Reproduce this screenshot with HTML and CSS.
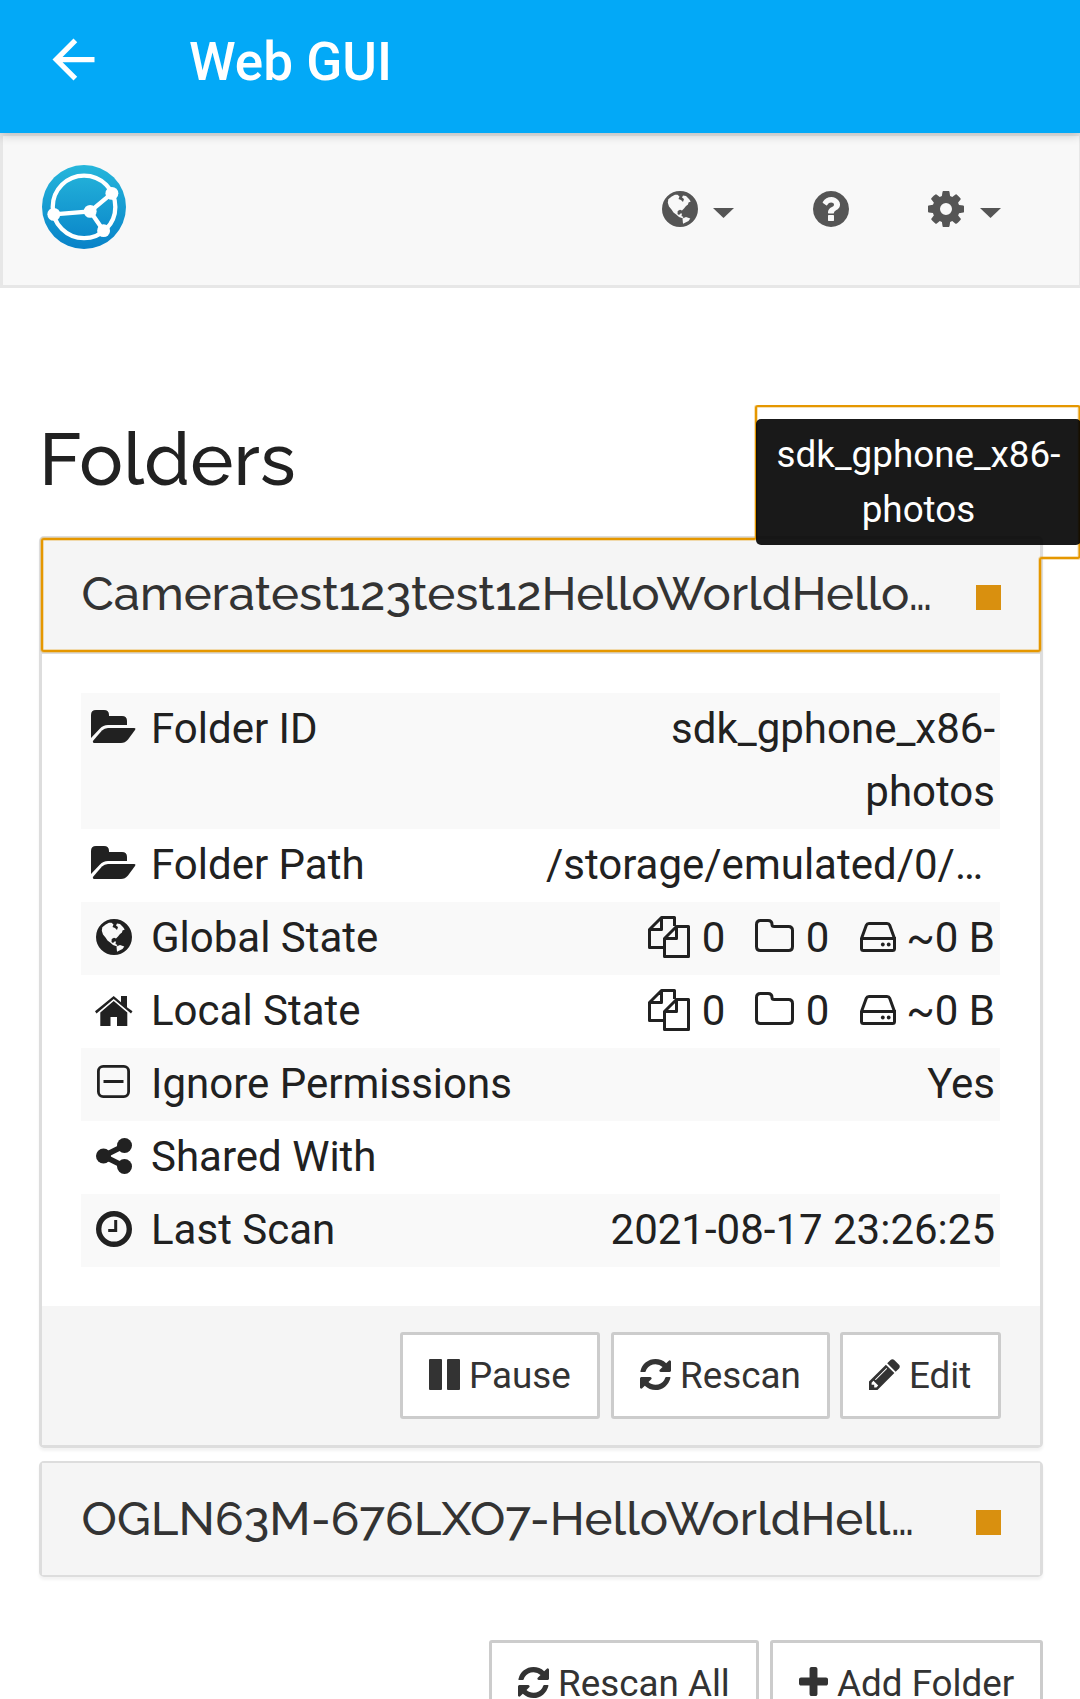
FILE: index.html
```html
<!DOCTYPE html>
<html lang="en">
<head>
<meta charset="utf-8">
<title>Web GUI</title>
<link rel="stylesheet" href="styles.css">
</head>
<body>
<svg class="defs" aria-hidden="true">
  <symbol id="folder-open" viewBox="0 0 45 33"><path d="M0 28V5Q0 0 5 0H13Q18 0 18 5V6H31Q36 6 36 11V15H17Q12 15 9 18.500Z"/><path d="M2.300 30.500L11 20.500Q13.500 18 17 18H43Q45.200 18 44 20L37 29.500Q34 33 30 33H3.500Q1 33 2.300 30.500Z"/></symbol>
  <symbol id="globe" viewBox="0 0 36 36"><path fill-rule="evenodd" d="M18 0A18 18 0 1 1 18 36A18 18 0 1 1 18 0ZM6.300 8.300L9.700 5.500L13 3.800L15.500 3.800L17.500 5.500L16.500 8L19 9L21 11L22 8L20 6.500L21 4.500L24 5L27 8L28.700 10.500L26.500 11.500L26 13.500L24 15L22 17.500L20 19.500L18 18.800L15.700 20L15.500 23L17 24L18.500 22.500L20 22.500L19.500 25L21.500 26L20.500 27.300L17 26L14.500 23.800L11.500 21.500L9.500 18.500L7 15.500L5.800 11.700ZM20.500 27.500L24 26L28.300 27.500L26.500 30L21 32.700Z"/></symbol>
  <symbol id="home" viewBox="0 0 38 30"><path d="M5.300 16.500L18.700 5L32.300 16.500V30H22V21H15.500V30H5.300Z"/><path d="M18.700 0L26 6.200V0H32V11.300L37.500 15.300L36 17.500L18.700 3L1.500 17.500L0 15.300Z"/></symbol>
  <symbol id="minus-square" viewBox="0 0 33 33"><rect x="1.400" y="1.400" width="30.200" height="30.200" rx="4.800" fill="none" stroke="currentColor" stroke-width="2.800"/><path d="M6.500 15H26.500V18H6.500Z"/></symbol>
  <symbol id="share" viewBox="0 0 36 36"><path d="M28.500 7.500L7.500 18L28.500 28.500" fill="none" stroke="currentColor" stroke-width="5.500"/><circle cx="28.500" cy="7.500" r="7.500"/><circle cx="7.500" cy="18" r="7.500"/><circle cx="28.500" cy="28.500" r="7.500"/></symbol>
  <symbol id="clock" viewBox="0 0 36 36"><circle cx="18" cy="18" r="15.300" fill="none" stroke="currentColor" stroke-width="5.400"/><path d="M18.200 9H21.200V21H12.200V18H18.200Z"/></symbol>
  <symbol id="files" viewBox="0 0 42 42"><path d="M15 31.500H1.500V13.500L13.500 1.500H26.500V10M1.400 13.500H13.500V1.400M16.500 40.500V22.500L28.500 10.500H40.500V40.500ZM16.800 22.500H28.500V10.700" fill="none" stroke="currentColor" stroke-width="3" stroke-linejoin="round"/></symbol>
  <symbol id="folder" viewBox="0 0 39 33"><path d="M1.500 5.500Q1.500 1.500 5.500 1.500H13Q17 1.500 17 5.500Q17 7.500 19.200 7.500H33.500Q37.500 7.500 37.500 11.500V27.500Q37.500 31.500 33.500 31.500H5.500Q1.500 31.500 1.500 27.500Z" fill="none" stroke="currentColor" stroke-width="3"/></symbol>
  <symbol id="hdd" viewBox="0 0 36 30"><path d="M1.500 16.500H34.500V26.500Q34.500 28.500 32.500 28.500H3.500Q1.500 28.500 1.500 26.500V16.500L6.300 3.300Q7 1.500 9 1.500H27Q29 1.500 29.700 3.300L34.500 16.500" fill="none" stroke="currentColor" stroke-width="3"/><circle cx="22.800" cy="22.500" r="1.900"/><circle cx="28.700" cy="22.500" r="1.900"/></symbol>
  <symbol id="pause" viewBox="0 0 31 31"><rect width="13" height="31" rx="1"/><rect x="18" width="13" height="31" rx="1"/></symbol>
  <symbol id="refresh" viewBox="128 128 1536 1536"><path d="M1639 1056q0 5-1 7-64 268-268 434.500t-478 166.500q-146 0-282.500-55t-243.500-157l-129 129q-19 19-45 19t-45-19-19-45v-448q0-26 19-45t45-19h448q26 0 45 19t19 45-19 45l-137 137q71 66 161 102t187 36q134 0 250-65t186-179q11-17 53-117 8-23 30-23h192q13 0 22.500 9.500t9.500 22.500zm25-800v448q0 26-19 45t-45 19h-448q-26 0-45-19t-19-45 19-45l138-138q-148-137-349-137-134 0-250 65t-186 179q-11 17-53 117-8 23-30 23h-199q-13 0-22.500-9.500t-9.500-22.500v-7q65-268 270-434.500t480-166.500q146 0 284 55.500t245 156.500l130-129q19-19 45-19t45 19 19 45z"/></symbol>
  <symbol id="pencil" viewBox="128 138 1526 1526"><path d="M491 1536l91-91-235-235-91 91v107h128v128h107zm523-928q0-22-22-22-10 0-17 7l-542 542q-7 7-7 17 0 22 22 22 10 0 17-7l542-542q7-7 7-17zm-54-192l416 416-832 832h-416v-416zm683 96q0 53-37 90l-166 166-416-416 166-165q36-38 90-38 53 0 91 38l235 234q37 39 37 91z"/></symbol>
  <symbol id="plus" viewBox="192 128 1408 1408"><path d="M1600 736v192q0 40-28 68t-68 28h-416v416q0 40-28 68t-68 28h-192q-40 0-68-28t-28-68v-416h-416q-40 0-68-28t-28-68v-192q0-40 28-68t68-28h416v-416q0-40 28-68t68-28h192q40 0 68 28t28 68v416h416q40 0 68 28t28 68z"/></symbol>
  <symbol id="question" viewBox="128 128 1536 1536"><path d="M1024 1376v-192q0-14-9-23t-23-9h-192q-14 0-23 9t-9 23v192q0 14 9 23t23 9h192q14 0 23-9t9-23zm256-672q0-88-55.500-163t-138.500-116-170-41q-243 0-371 213-15 24 8 42l132 100q7 6 19 6 16 0 25-12 53-68 86-92 34-24 86-24 48 0 85.500 26t37.500 59q0 38-20 61t-68 45q-63 28-115.500 86.500t-52.500 125.500v36q0 14 9 23t23 9h192q14 0 23-9t9-23q0-19 21.500-49.500t54.500-49.500q32-18 49-28.500t46-35 44.500-48 28-60.500 12.500-81zm384 192q0 209-103 385.500t-279.500 279.500-385.500 103-385.500-103-279.500-279.500-103-385.500 103-385.500 279.500-279.500 385.500-103 385.500 103 279.500 279.500 103 385.500z"/></symbol>
  <symbol id="cog" viewBox="128 128 1536 1536"><path d="M1152 896q0-106-75-181t-181-75-181 75-75 181 75 181 181 75 181-75 75-181zm512-109v222q0 12-8 23t-20 13l-185 28q-19 54-39 91 35 50 107 138 10 12 10 25t-9 23q-27 37-99 108t-94 71q-12 0-26-9l-138-108q-44 23-91 38-16 136-29 186-7 28-36 28h-222q-14 0-24.500-8.500t-11.500-21.500l-28-184q-49-16-90-37l-141 107q-10 9-25 9-14 0-25-11-126-114-165-168-7-10-7-23 0-12 8-23 15-21 51-66.500t54-70.500q-27-50-41-99l-183-27q-13-2-21-12.500t-8-23.500v-222q0-12 8-23t19-13l186-28q14-46 39-92-40-57-107-138-10-12-10-24 0-10 9-23 26-36 98.500-107.500t94.500-71.500q13 0 26 10l138 107q44-23 91-38 16-136 29-186 7-28 36-28h222q14 0 24.500 8.500t11.500 21.500l28 184q49 16 90 37l142-107q9-9 24-9 13 0 25 10 129 119 165 170 7 8 7 22 0 12-8 23-15 21-51 66.500t-54 70.500q26 50 41 98l183 28q13 2 21 12.500t8 23.500z"/></symbol>
</svg>

<header class="appbar">
  <svg class="back" viewBox="0 0 24 24"><path d="M20 11H7.830l5.590-5.590L12 4l-8 8 8 8 1.410-1.410L7.830 13H20v-2z"/></svg>
  <h1 class="appbar-title">Web GUI</h1>
</header>

<nav class="navbar">
  <svg class="logo" viewBox="0 0 117.300 117.300">
    <defs><linearGradient id="logo-fill" x1="0" y1="0" x2="0" y2="1"><stop offset="0" stop-color="#26b6db"/><stop offset="1" stop-color="#0882c8"/></linearGradient></defs>
    <circle cx="58.650" cy="58.650" r="58.650" fill="url(#logo-fill)"/>
    <g fill="none" stroke="#fff" stroke-width="6"><circle cx="58.700" cy="58.500" r="43.700"/><path d="M16.500 68.900L67.300 64.700L97.600 39.600M67.300 64.700L86 91.700"/></g>
    <g fill="#fff"><circle cx="67.300" cy="64.700" r="9"/><circle cx="97.600" cy="39.600" r="9"/><circle cx="16.500" cy="68.900" r="9"/><circle cx="86" cy="91.700" r="9"/></g>
  </svg>
  <div class="nav-items">
    <span class="nav-item"><svg class="icon i36"><use href="#globe"/></svg><i class="caret"></i></span>
    <span class="nav-item"><svg class="icon i36"><use href="#question"/></svg></span>
    <span class="nav-item"><svg class="icon i36"><use href="#cog"/></svg><i class="caret"></i></span>
  </div>
</nav>

<main class="content">
  <h3 class="heading">Folders</h3>

  <section class="panel">
    <div class="panel-heading">
      <span class="panel-title">Cameratest123test12HelloWorldHello…</span>
      <i class="status"></i>
      <svg class="focus-ring" viewBox="0 0 1041 250">
        <path class="halo" d="M5 134H715Q717 134 717 132V3Q717 1 719 1H1038.500Q1040.500 1 1040.500 3V151Q1040.500 153 1038.500 153H1003Q1001 153 1001 155V244Q1001 246 999 246H5Q3 246 3 244V136Q3 134 5 134Z"/>
        <path class="line" d="M5 134H715Q717 134 717 132V3Q717 1 719 1H1038.500Q1040.500 1 1040.500 3V151Q1040.500 153 1038.500 153H1003Q1001 153 1001 155V244Q1001 246 999 246H5Q3 246 3 244V136Q3 134 5 134Z"/>
      </svg>
      <div class="tooltip">sdk_gphone_x86-<br>photos</div>
    </div>
    <div class="panel-body">
      <div class="row"><span class="ico"><svg class="icon folder-open"><use href="#folder-open"/></svg></span><span class="label">Folder ID</span><span class="value">sdk_gphone_x86-<br>photos</span></div>
      <div class="row"><span class="ico"><svg class="icon folder-open"><use href="#folder-open"/></svg></span><span class="label">Folder Path</span><span class="value path">/storage/emulated/0/…</span></div>
      <div class="row"><span class="ico"><svg class="icon i36"><use href="#globe"/></svg></span><span class="label">Global State</span><span class="value stats"><svg class="icon files"><use href="#files"/></svg><span class="count">0</span><svg class="icon folder"><use href="#folder"/></svg><span class="count">0</span><svg class="icon hdd"><use href="#hdd"/></svg><span>~0 B</span></span></div>
      <div class="row"><span class="ico"><svg class="icon home"><use href="#home"/></svg></span><span class="label">Local State</span><span class="value stats"><svg class="icon files"><use href="#files"/></svg><span class="count">0</span><svg class="icon folder"><use href="#folder"/></svg><span class="count">0</span><svg class="icon hdd"><use href="#hdd"/></svg><span>~0 B</span></span></div>
      <div class="row"><span class="ico"><svg class="icon i33"><use href="#minus-square"/></svg></span><span class="label">Ignore Permissions</span><span class="value">Yes</span></div>
      <div class="row"><span class="ico"><svg class="icon i36"><use href="#share"/></svg></span><span class="label">Shared With</span></div>
      <div class="row"><span class="ico"><svg class="icon i36"><use href="#clock"/></svg></span><span class="label">Last Scan</span><span class="value">2021-08-17 23:26:25</span></div>
    </div>
    <div class="panel-footer">
      <span class="btn pause"><svg class="icon i31"><use href="#pause"/></svg>Pause</span>
      <span class="btn rescan"><svg class="icon i31"><use href="#refresh"/></svg>Rescan</span>
      <span class="btn edit"><svg class="icon i31"><use href="#pencil"/></svg>Edit</span>
    </div>
  </section>

  <section class="panel collapsed">
    <div class="panel-heading">
      <span class="panel-title">OGLN63M-676LXO7-HelloWorldHell…</span>
      <i class="status"></i>
    </div>
  </section>

  <div class="actions">
    <span class="btn rescan-all"><svg class="icon i31"><use href="#refresh"/></svg>Rescan All</span>
    <span class="btn add"><svg class="icon i29"><use href="#plus"/></svg>Add Folder</span>
  </div>
</main>
</body>
</html>
```
FILE: styles.css
```css
* { box-sizing: border-box; }
html, body { margin: 0; }
body {
  width: 1080px;
  height: 1699px;
  overflow: hidden;
  background: #fff;
  color: #212121;
  font: 42px/63px Roboto, sans-serif;
}
svg { display: block; flex: none; fill: currentColor; }
.defs { display: none; }

.appbar {
  display: flex;
  align-items: flex-start;
  height: 133px;
  padding: 28px 42px;
  background: #03a9f7;
  color: #fff;
  position: relative;
  box-shadow: 0 2px 10px rgba(0, 0, 0, .2);
}
.back { width: 63px; height: 63px; }
.appbar-title {
  margin: 3px 0 0 84px;
  font-size: 53px;
  line-height: 62px;
  font-weight: 500;
}

.navbar {
  display: flex;
  justify-content: space-between;
  width: 1082px;
  height: 155px;
  padding: 29px 78px 0 39px;
  border: 3px solid #e7e7e7;
  background: #f8f8f8;
  color: #555;
}
.logo { width: 84px; height: 84px; }
.nav-items { display: flex; gap: 79px; padding-top: 26px; }
.nav-item { display: flex; align-items: flex-start; gap: 15px; }
.nav-item:last-child { gap: 16px; }
.caret {
  width: 21px;
  height: 10px;
  margin-top: 17px;
  background: currentColor;
  clip-path: polygon(0 0, 100% 0, 50% 100%);
}

.i36 { width: 36px; height: 36px; }
.i33 { width: 33px; height: 33px; }
.i31 { width: 31px; height: 31px; }
.i29 { width: 29px; height: 29px; }
.folder-open { width: 45px; height: 33px; }
.home { width: 38px; height: 30px; }
.files { width: 42px; height: 42px; }
.folder { width: 39px; height: 33px; }
.hdd { width: 36px; height: 30px; }

.content { padding: 128px 37px 0 39px; }
.heading {
  height: 120px;
  margin: 0;
  padding-top: 3px;
  font: 500 73px/80px Raleway, Lato, sans-serif;
  letter-spacing: .1px;
}

.panel {
  border: 3px solid #ddd;
  border-radius: 5px;
  box-shadow: 0 3px 3px rgba(0, 0, 0, .05);
}
.panel-heading {
  position: relative;
  display: flex;
  justify-content: space-between;
  height: 115px;
  padding: 26px 39px 0 39.5px;
  background: #f5f5f5;
  border-bottom: 3px solid #ddd;
  color: #333;
}
.panel-title {
  font: 500 47.300px/58px Raleway, Lato, sans-serif;
  white-space: nowrap;
}
.status { width: 25px; height: 25px; margin-top: 20px; background: #d9900f; }
.focus-ring {
  position: absolute;
  left: -3px;
  top: -134px;
  width: 1041px;
  height: 250px;
  fill: none;
}
.halo { stroke: #e59700; stroke-opacity: .3; stroke-width: 4; }
.line { stroke: #e59700; stroke-width: 2; }
.tooltip {
  position: absolute;
  left: 714px;
  top: -120px;
  width: 325px;
  height: 126px;
  padding: 8px 0;
  border-radius: 5px;
  background: rgba(0, 0, 0, .9);
  color: #fff;
  font-size: 36.800px;
  line-height: 55px;
  text-align: center;
}

.panel-body { padding: 39px 40px 39px 39px; height: 652px; }
.row { display: flex; min-height: 73px; padding: 4px 5px 6px; }
.row:nth-child(odd) { background: #f9f9f9; }
.ico {
  display: flex;
  justify-content: center;
  align-items: center;
  width: 55px;
  height: 63px;
}
.ico .folder-open, .ico .i33 { margin-bottom: 4px; }
.ico .i36 { margin-bottom: 1px; }
.label { margin-left: 10px; }
.value { margin-left: auto; text-align: right; }
.path { padding-right: 12px; }
.stats { display: flex; }
.stats .files { margin: 10px 10px 0 0; }
.stats .folder { margin: 13px 10px 0 30px; }
.stats .hdd { margin: 16px 10px 0 31px; }
.count { width: 25px; }

.panel-footer {
  display: flex;
  justify-content: flex-end;
  gap: 10px;
  height: 139px;
  padding: 26px 39px 0;
  background: #f5f5f5;
}
.btn {
  display: flex;
  height: 87px;
  padding: 0 26px;
  border: 3px solid #ccc;
  border-radius: 3px;
  background: #fff;
  color: #333;
  font-size: 36.800px;
  line-height: 81px;
  white-space: nowrap;
}
.btn .icon { margin: 24px 9px 0 0; }
.pause { width: 200px; margin-right: 1px; }
.rescan { width: 219px; }
.edit { width: 161px; }

.collapsed { margin-top: 13px; border-width: 2px 3px; }
.collapsed .panel-heading { height: 112px; border-bottom: 0; }
.collapsed .panel-title { line-height: 60px; letter-spacing: .08px; }
.collapsed .status { margin-top: 21px; }

.actions { display: flex; justify-content: flex-end; gap: 11px; margin-top: 63px; }
.rescan-all { width: 270px; }
.add { width: 273px; }
```
